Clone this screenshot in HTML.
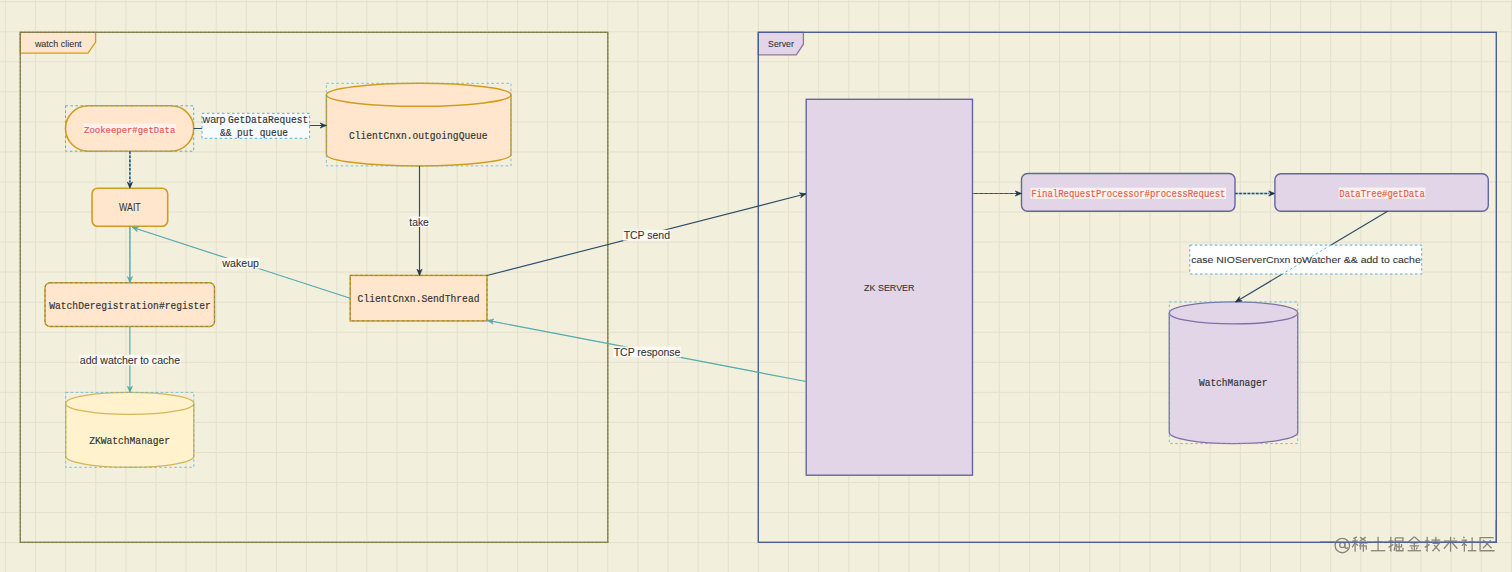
<!DOCTYPE html>
<html><head><meta charset="utf-8"><style>
html,body{margin:0;padding:0;background:#f2efdd;width:1512px;height:572px;overflow:hidden;}
svg{display:block;}
</style></head><body><svg width="1512" height="572" viewBox="0 0 1512 572"><g stroke="#e3e0cc" stroke-width="1"><line x1="5.40" y1="0" x2="5.40" y2="572"/><line x1="35.52" y1="0" x2="35.52" y2="572"/><line x1="65.64" y1="0" x2="65.64" y2="572"/><line x1="95.76" y1="0" x2="95.76" y2="572"/><line x1="125.88" y1="0" x2="125.88" y2="572"/><line x1="156.00" y1="0" x2="156.00" y2="572"/><line x1="186.12" y1="0" x2="186.12" y2="572"/><line x1="216.24" y1="0" x2="216.24" y2="572"/><line x1="246.36" y1="0" x2="246.36" y2="572"/><line x1="276.48" y1="0" x2="276.48" y2="572"/><line x1="306.60" y1="0" x2="306.60" y2="572"/><line x1="336.72" y1="0" x2="336.72" y2="572"/><line x1="366.84" y1="0" x2="366.84" y2="572"/><line x1="396.96" y1="0" x2="396.96" y2="572"/><line x1="427.08" y1="0" x2="427.08" y2="572"/><line x1="457.20" y1="0" x2="457.20" y2="572"/><line x1="487.32" y1="0" x2="487.32" y2="572"/><line x1="517.44" y1="0" x2="517.44" y2="572"/><line x1="547.56" y1="0" x2="547.56" y2="572"/><line x1="577.68" y1="0" x2="577.68" y2="572"/><line x1="607.80" y1="0" x2="607.80" y2="572"/><line x1="637.92" y1="0" x2="637.92" y2="572"/><line x1="668.04" y1="0" x2="668.04" y2="572"/><line x1="698.16" y1="0" x2="698.16" y2="572"/><line x1="728.28" y1="0" x2="728.28" y2="572"/><line x1="758.40" y1="0" x2="758.40" y2="572"/><line x1="788.52" y1="0" x2="788.52" y2="572"/><line x1="818.64" y1="0" x2="818.64" y2="572"/><line x1="848.76" y1="0" x2="848.76" y2="572"/><line x1="878.88" y1="0" x2="878.88" y2="572"/><line x1="909.00" y1="0" x2="909.00" y2="572"/><line x1="939.12" y1="0" x2="939.12" y2="572"/><line x1="969.24" y1="0" x2="969.24" y2="572"/><line x1="999.36" y1="0" x2="999.36" y2="572"/><line x1="1029.48" y1="0" x2="1029.48" y2="572"/><line x1="1059.60" y1="0" x2="1059.60" y2="572"/><line x1="1089.72" y1="0" x2="1089.72" y2="572"/><line x1="1119.84" y1="0" x2="1119.84" y2="572"/><line x1="1149.96" y1="0" x2="1149.96" y2="572"/><line x1="1180.08" y1="0" x2="1180.08" y2="572"/><line x1="1210.20" y1="0" x2="1210.20" y2="572"/><line x1="1240.32" y1="0" x2="1240.32" y2="572"/><line x1="1270.44" y1="0" x2="1270.44" y2="572"/><line x1="1300.56" y1="0" x2="1300.56" y2="572"/><line x1="1330.68" y1="0" x2="1330.68" y2="572"/><line x1="1360.80" y1="0" x2="1360.80" y2="572"/><line x1="1390.92" y1="0" x2="1390.92" y2="572"/><line x1="1421.04" y1="0" x2="1421.04" y2="572"/><line x1="1451.16" y1="0" x2="1451.16" y2="572"/><line x1="1481.28" y1="0" x2="1481.28" y2="572"/><line x1="1511.40" y1="0" x2="1511.40" y2="572"/><line x1="0" y1="1.70" x2="1512" y2="1.70"/><line x1="0" y1="31.75" x2="1512" y2="31.75"/><line x1="0" y1="61.80" x2="1512" y2="61.80"/><line x1="0" y1="91.85" x2="1512" y2="91.85"/><line x1="0" y1="121.90" x2="1512" y2="121.90"/><line x1="0" y1="151.95" x2="1512" y2="151.95"/><line x1="0" y1="182.00" x2="1512" y2="182.00"/><line x1="0" y1="212.05" x2="1512" y2="212.05"/><line x1="0" y1="242.10" x2="1512" y2="242.10"/><line x1="0" y1="272.15" x2="1512" y2="272.15"/><line x1="0" y1="302.20" x2="1512" y2="302.20"/><line x1="0" y1="332.25" x2="1512" y2="332.25"/><line x1="0" y1="362.30" x2="1512" y2="362.30"/><line x1="0" y1="392.35" x2="1512" y2="392.35"/><line x1="0" y1="422.40" x2="1512" y2="422.40"/><line x1="0" y1="452.45" x2="1512" y2="452.45"/><line x1="0" y1="482.50" x2="1512" y2="482.50"/><line x1="0" y1="512.55" x2="1512" y2="512.55"/><line x1="0" y1="542.60" x2="1512" y2="542.60"/></g><path d="M758.3,32.3 L803.4,32.3 L803.4,44.2 L796.3,54.8 L758.3,54.8 Z" fill="#e1d5e7" stroke="#9673a6" stroke-width="1.3"/><path d="M20.25,32.3 L95.6,32.3 L95.6,42 L88,53.1 L20.25,53.1 Z" fill="#fde6d0" stroke="#d39c1e" stroke-width="1.3"/><rect x="20.25" y="32.3" width="587.55" height="510" fill="none" stroke="#8f8238" stroke-width="1.3"/><rect x="20.25" y="32.3" width="587.55" height="510" fill="none" stroke="#5a7a70" stroke-width="1.2" stroke-dasharray="2 2" opacity="0.6"/><rect x="758.3" y="32.3" width="738" height="510" fill="none" stroke="#4b5e96" stroke-width="1.4"/><text x="34.9" y="46.6" font-family='"Liberation Sans", sans-serif' font-size="9.6" fill="#333" textLength="46.70" lengthAdjust="spacingAndGlyphs" stroke="#333" stroke-width="0.08">watch client</text><text x="768.1" y="46.8" font-family='"Liberation Sans", sans-serif' font-size="9.6" fill="#333" textLength="25.70" lengthAdjust="spacingAndGlyphs" stroke="#333" stroke-width="0.08">Server</text><rect x="65.5" y="105.8" width="128.20" height="45.40" rx="22.7" fill="#ffe6cc" stroke="#d39c1e" stroke-width="1.6"/><rect x="65.5" y="105.8" width="128.2" height="45.4" fill="none" stroke="#52b0de" stroke-width="1" stroke-dasharray="2.5 2.5"/><rect x="83.50" y="123.6" width="92.40" height="10.40" fill="#fdf1ee"/><text x="84.1" y="132.6" font-family='"Liberation Mono", monospace' font-size="9.5" fill="#e5534b" textLength="91.20" lengthAdjust="spacingAndGlyphs" stroke="#e5534b" stroke-width="0.18">Zookeeper#getData</text><rect x="92" y="188.3" width="75.70" height="38.00" rx="5.5" fill="#ffe6cc" stroke="#d39c1e" stroke-width="1.6"/><text x="119.1" y="211.3" font-family='"Liberation Sans", sans-serif' font-size="10.2" fill="#333" textLength="21.60" lengthAdjust="spacingAndGlyphs" stroke="#333" stroke-width="0.08">WAIT</text><path d="M326.4,94.8 A92.30000000000001,11.5 0 0 1 511,94.8 L511,154.4 A92.30000000000001,11.5 0 0 1 326.4,154.4 Z" fill="#ffe6cc" stroke="#d39c1e" stroke-width="1.5"/><path d="M326.4,94.8 A92.30000000000001,11.5 0 0 0 511,94.8" fill="none" stroke="#d39c1e" stroke-width="1.5"/><rect x="326.4" y="83.3" width="184.60" height="82.60" fill="none" stroke="#52b0de" stroke-width="1" stroke-dasharray="2.5 2.5" opacity="0.75"/><text x="349" y="139" font-family='"Liberation Mono", monospace' font-size="10.5" fill="#333" textLength="138.50" lengthAdjust="spacingAndGlyphs" stroke="#333" stroke-width="0.18">ClientCnxn.outgoingQueue</text><rect x="45" y="282.8" width="169.50" height="43.60" rx="5" fill="#ffe6cc" stroke="#d39c1e" stroke-width="1.5"/><rect x="45" y="282.8" width="169.50" height="43.60" rx="5" fill="none" stroke="#3f7488" stroke-width="1" stroke-dasharray="2.5 2.5" opacity="0.6"/><text x="49.3" y="308.5" font-family='"Liberation Mono", monospace' font-size="10.5" fill="#333" textLength="161.50" lengthAdjust="spacingAndGlyphs" stroke="#333" stroke-width="0.18">WatchDeregistration#register</text><path d="M65.7,403.4 A64.05000000000001,11 0 0 1 193.8,403.4 L193.8,456.3 A64.05000000000001,11 0 0 1 65.7,456.3 Z" fill="#fff2cc" stroke="#d6b656" stroke-width="1.4"/><path d="M65.7,403.4 A64.05000000000001,11 0 0 0 193.8,403.4" fill="none" stroke="#d6b656" stroke-width="1.4"/><rect x="65.7" y="392.4" width="128.10" height="74.90" fill="none" stroke="#52b0de" stroke-width="1" stroke-dasharray="2.5 2.5" opacity="0.75"/><text x="89.2" y="443.9" font-family='"Liberation Mono", monospace' font-size="10.5" fill="#333" textLength="80.80" lengthAdjust="spacingAndGlyphs" stroke="#333" stroke-width="0.18">ZKWatchManager</text><rect x="350.2" y="275.4" width="136.80" height="45.50" rx="0" fill="#ffe6cc" stroke="#d39c1e" stroke-width="1.5"/><rect x="350.2" y="275.4" width="136.80" height="45.50" rx="0" fill="none" stroke="#3f7488" stroke-width="1" stroke-dasharray="2.5 2.5" opacity="0.6"/><text x="357.6" y="301.5" font-family='"Liberation Mono", monospace' font-size="10.5" fill="#333" textLength="121.90" lengthAdjust="spacingAndGlyphs" stroke="#333" stroke-width="0.18">ClientCnxn.SendThread</text><rect x="806.2" y="99.3" width="166.30" height="375.90" rx="0" fill="#e1d5e7" stroke="#62679e" stroke-width="1.4"/><text x="864.1" y="291.2" font-family='"Liberation Sans", sans-serif' font-size="9.8" fill="#333" textLength="50.40" lengthAdjust="spacingAndGlyphs" stroke="#333" stroke-width="0.08">ZK SERVER</text><rect x="1021.5" y="173.5" width="213.50" height="37.80" rx="6" fill="#e1d5e7" stroke="#62679e" stroke-width="1.4"/><rect x="1030.60" y="187.8" width="195.50" height="11.10" fill="#fdf2f0"/><text x="1031.2" y="196.7" font-family='"Liberation Mono", monospace' font-size="10" fill="#e4604a" textLength="194.30" lengthAdjust="spacingAndGlyphs" stroke="#e4604a" stroke-width="0.18">FinalRequestProcessor#processRequest</text><rect x="1274.9" y="173.8" width="213.40" height="37.40" rx="6" fill="#e1d5e7" stroke="#62679e" stroke-width="1.4"/><rect x="1338.70" y="187.6" width="86.70" height="11.10" fill="#fdf2f0"/><text x="1339.3" y="196.5" font-family='"Liberation Mono", monospace' font-size="10" fill="#e4604a" textLength="85.50" lengthAdjust="spacingAndGlyphs" stroke="#e4604a" stroke-width="0.18">DataTree#getData</text><path d="M1169.3,312.9 A64.20000000000005,11 0 0 1 1297.7,312.9 L1297.7,432.6 A64.20000000000005,11 0 0 1 1169.3,432.6 Z" fill="#e1d5e7" stroke="#8070a8" stroke-width="1.4"/><path d="M1169.3,312.9 A64.20000000000005,11 0 0 0 1297.7,312.9" fill="none" stroke="#8070a8" stroke-width="1.4"/><rect x="1169.3" y="301.9" width="128.40" height="141.70" fill="none" stroke="#52b0de" stroke-width="1" stroke-dasharray="2.5 2.5" opacity="0.75"/><text x="1199" y="385.7" font-family='"Liberation Mono", monospace' font-size="10.5" fill="#333" textLength="68.40" lengthAdjust="spacingAndGlyphs" stroke="#333" stroke-width="0.18">WatchManager</text><path d="M193.7,128.5 L250,128.5" fill="none" stroke="#2a4e66" stroke-width="1.15"/><path d="M250,125.5 L326.4,125.5" fill="none" stroke="#2a4e66" stroke-width="1.15"/><path d="M326.40,125.50 L320.20,128.10 L322.06,125.50 L320.20,122.90 Z" fill="#1c3446" stroke="#1c3446" stroke-width="0.6"/><rect x="202" y="113.3" width="107.6" height="25" fill="#f7fbfd"/><rect x="202" y="113.3" width="107.6" height="25" fill="none" stroke="#52b0de" stroke-width="1" stroke-dasharray="2.5 2.5"/><text x="202.6" y="123" font-family='"Liberation Sans", sans-serif' font-size="10.5" fill="#333" textLength="22.80" lengthAdjust="spacingAndGlyphs" stroke="#333" stroke-width="0.08">warp</text><text x="228" y="123" font-family='"Liberation Mono", monospace' font-size="10.5" fill="#333" textLength="80.20" lengthAdjust="spacingAndGlyphs" stroke="#333" stroke-width="0.18">GetDataRequest</text><text x="220" y="135.5" font-family='"Liberation Mono", monospace' font-size="10.5" fill="#333" textLength="68.00" lengthAdjust="spacingAndGlyphs" stroke="#333" stroke-width="0.18">&amp;&amp; put queue</text><path d="M129.9,151.2 L129.9,188.3" stroke="#8cc8e6" stroke-width="1.4"/><path d="M129.9,151.2 L129.9,182.5" stroke="#2a4e66" stroke-width="1.5" stroke-dasharray="2.6 1.6"/><path d="M129.90,188.30 L127.30,182.10 L129.90,183.96 L132.50,182.10 Z" fill="#1c3446" stroke="#1c3446" stroke-width="0.6"/><path d="M129.9,226.3 L129.9,282.8" fill="none" stroke="#55aaa5" stroke-width="1.4"/><path d="M129.9,226.3 L129.9,282.8" fill="none" stroke="#52b0de" stroke-width="0.8" stroke-dasharray="2.5 2.5" opacity="0.5"/><path d="M129.90,282.80 L127.30,276.60 L129.90,278.46 L132.50,276.60 Z" fill="#55aaa5" stroke="#55aaa5" stroke-width="0.6"/><path d="M129.9,326.4 L129.9,392.4" fill="none" stroke="#55aaa5" stroke-width="1.15"/><path d="M129.90,392.40 L127.30,386.20 L129.90,388.06 L132.50,386.20 Z" fill="#55aaa5" stroke="#55aaa5" stroke-width="0.6"/><rect x="79.20" y="354.7" width="101.40" height="10.60" fill="#fbfaf4"/><text x="79.8" y="363.8" font-family='"Liberation Sans", sans-serif' font-size="10" fill="#333" textLength="100.20" lengthAdjust="spacingAndGlyphs" stroke="#333" stroke-width="0.08">add watcher to cache</text><path d="M419.5,165.9 L419.5,275.4" fill="none" stroke="#2a4e66" stroke-width="1.15"/><path d="M419.50,275.40 L416.90,269.20 L419.50,271.06 L422.10,269.20 Z" fill="#1c3446" stroke="#1c3446" stroke-width="0.6"/><rect x="408.70" y="216.6" width="20.70" height="10.40" fill="#fbfaf4"/><text x="409.3" y="225.7" font-family='"Liberation Sans", sans-serif' font-size="10.5" fill="#333" textLength="19.50" lengthAdjust="spacingAndGlyphs" stroke="#333" stroke-width="0.08">take</text><path d="M350.2,298.3 L132.1,227.3" fill="none" stroke="#55aaa5" stroke-width="1.15"/><path d="M350.2,298.3 L132.1,227.3" fill="none" stroke="#52b0de" stroke-width="0.8" stroke-dasharray="2.5 2.5" opacity="0.5"/><path d="M132.10,227.30 L138.80,226.75 L136.23,228.64 L137.19,231.69 Z" fill="#55aaa5" stroke="#55aaa5" stroke-width="0.6"/><rect x="221.70" y="257.9" width="37.90" height="10.70" fill="#fbfaf4"/><text x="222.3" y="266.8" font-family='"Liberation Sans", sans-serif' font-size="10.5" fill="#333" textLength="36.70" lengthAdjust="spacingAndGlyphs" stroke="#333" stroke-width="0.08">wakeup</text><path d="M487,275.5 L806,193.8" fill="none" stroke="#2a4e66" stroke-width="1.15"/><path d="M806.00,193.80 L800.64,197.86 L801.80,194.88 L799.35,192.82 Z" fill="#1c3446" stroke="#1c3446" stroke-width="0.6"/><rect x="623.10" y="229.8" width="47.50" height="10.80" fill="#fbfaf4"/><text x="623.7" y="239" font-family='"Liberation Sans", sans-serif' font-size="10.5" fill="#333" textLength="46.30" lengthAdjust="spacingAndGlyphs" stroke="#333" stroke-width="0.08">TCP send</text><path d="M806,381.5 L487.4,320.4" fill="none" stroke="#55aaa5" stroke-width="1.15"/><path d="M806,381.5 L487.4,320.4" fill="none" stroke="#52b0de" stroke-width="0.8" stroke-dasharray="2.5 2.5" opacity="0.5"/><path d="M487.40,320.40 L493.98,319.01 L491.66,321.22 L493.00,324.12 Z" fill="#55aaa5" stroke="#55aaa5" stroke-width="0.6"/><rect x="613.10" y="346.6" width="67.90" height="10.80" fill="#fbfaf4"/><text x="613.7" y="355.8" font-family='"Liberation Sans", sans-serif' font-size="10.5" fill="#333" textLength="66.70" lengthAdjust="spacingAndGlyphs" stroke="#333" stroke-width="0.08">TCP response</text><path d="M972.5,193.5 L1021.5,193.5" fill="none" stroke="#2a4e66" stroke-width="1.15"/><path d="M972.5,193.5 L1021.5,193.5" fill="none" stroke="#52b0de" stroke-width="0.8" stroke-dasharray="2.5 2.5" opacity="0.5"/><path d="M1021.50,193.50 L1015.30,196.10 L1017.16,193.50 L1015.30,190.90 Z" fill="#1c3446" stroke="#1c3446" stroke-width="0.6"/><path d="M1235,193.5 L1274.9,193.5" stroke="#8cc8e6" stroke-width="1.3"/><path d="M1235,193.5 L1269,193.5" stroke="#2a4e66" stroke-width="1.4" stroke-dasharray="2.6 1.6"/><path d="M1274.90,193.50 L1268.70,196.10 L1270.56,193.50 L1268.70,190.90 Z" fill="#1c3446" stroke="#1c3446" stroke-width="0.6"/><path d="M1387.6,211.2 L1235.5,302" fill="none" stroke="#2a4e66" stroke-width="1.15"/><path d="M1235.50,302.00 L1239.49,296.59 L1239.23,299.78 L1242.16,301.05 Z" fill="#1c3446" stroke="#1c3446" stroke-width="0.6"/><rect x="1189.8" y="245.1" width="231.9" height="28.9" fill="#ffffff"/><rect x="1189.8" y="245.1" width="231.9" height="28.9" fill="none" stroke="#52b0de" stroke-width="1" stroke-dasharray="2.5 2.5"/><path d="M1330.8,245.1 L1282.4,274" fill="none" stroke="#52b0de" stroke-width="0.9" stroke-dasharray="2.5 2.5"/><text x="1191.2" y="263.1" font-family='"Liberation Sans", sans-serif' font-size="9.7" fill="#333" textLength="229.60" lengthAdjust="spacingAndGlyphs" stroke="#333" stroke-width="0.08">case NIOServerCnxn toWatcher &amp;&amp; add to cache</text><g fill="none" stroke="#fbfaf3" stroke-width="2.6" stroke-linecap="round" opacity="0.45"><circle cx="1342.3" cy="545.5" r="7.2"/><circle cx="1342.3" cy="545" r="2.6"/><path d="M1344.9,542.3 L1344.9,547.5 Q1346,549 1348,547.5"/><g transform="translate(1352.20,536.2) scale(0.9688)"><path d="M5,0.8 L1,2.5"/><path d="M0,5 L6,5"/><path d="M3,2 L3,16"/><path d="M3,6.5 L0,11.5"/><path d="M3.5,7.5 L6,9.5"/><path d="M8,1 L14,5"/><path d="M14,1 L8,5"/><path d="M7,7 L16,7"/><path d="M10.5,5.5 L7.5,10.5"/><path d="M8.5,10 L14.5,10 L14.5,14"/><path d="M8.5,10 L8.5,14"/><path d="M11.5,8 L11.5,16"/></g><g transform="translate(1370.33,536.2) scale(0.9688)"><path d="M3,6 L13,6"/><path d="M8,0.5 L8,15"/><path d="M0.5,15 L15.5,15"/></g><g transform="translate(1388.46,536.2) scale(0.9688)"><path d="M0,5 L5,5"/><path d="M2.5,0.5 L2.5,15 L1.3,14"/><path d="M0,11.5 L5,8.5"/><path d="M7,1.8 L15,1.8 L15,5 L7,5"/><path d="M7,1.8 L7,10 L5.8,15"/><path d="M11,6 L11,15"/><path d="M8.5,8 L8.5,11 L13.5,11 L13.5,8"/><path d="M8,12 L8,15 L15,15 L15,12"/></g><g transform="translate(1406.59,536.2) scale(0.9688)"><path d="M8,0.5 L0.5,7"/><path d="M8,0.5 L15.5,7"/><path d="M4,6.8 L12,6.8"/><path d="M3,10 L13,10"/><path d="M8,6.8 L8,15"/><path d="M5,11.5 L6,13.8"/><path d="M11,11.5 L10,13.8"/><path d="M1,15 L15,15"/></g><g transform="translate(1424.72,536.2) scale(0.9688)"><path d="M0,5 L5,5"/><path d="M2.5,0.5 L2.5,15 L1.3,14"/><path d="M0,11.5 L5,8.5"/><path d="M7,4 L16,4"/><path d="M11.5,0.5 L11.5,7"/><path d="M8,7.5 L15,7.5 L8,15.5"/><path d="M9.5,9 L15.5,15.5"/></g><g transform="translate(1442.85,536.2) scale(0.9688)"><path d="M1,5 L15,5"/><path d="M8,0.5 L8,16"/><path d="M7.5,5.5 L1,13"/><path d="M8.5,5.5 L15,13"/><path d="M11,1.5 L12.5,3"/></g><g transform="translate(1460.98,536.2) scale(0.9688)"><path d="M2.5,0.5 L3.5,2"/><path d="M0.5,4 L5.5,4 L1,10"/><path d="M3.5,7 L3.5,16"/><path d="M4,8 L6,10"/><path d="M8,6 L15,6"/><path d="M11.5,1 L11.5,15"/><path d="M7,15 L16,15"/></g><g transform="translate(1479.11,536.2) scale(0.9688)"><path d="M15,1.5 L1,1.5 L1,15 L16,15"/><path d="M4,4 L13,12.5"/><path d="M12,4 L4,12.5"/></g></g><g fill="none" stroke="#888578" stroke-width="1.35" stroke-linecap="butt"><circle cx="1342.3" cy="545.5" r="7.2"/><circle cx="1342.3" cy="545" r="2.6"/><path d="M1344.9,542.3 L1344.9,547.5 Q1346,549 1348,547.5"/><g transform="translate(1352.20,536.2) scale(0.9688)"><path d="M5,0.8 L1,2.5"/><path d="M0,5 L6,5"/><path d="M3,2 L3,16"/><path d="M3,6.5 L0,11.5"/><path d="M3.5,7.5 L6,9.5"/><path d="M8,1 L14,5"/><path d="M14,1 L8,5"/><path d="M7,7 L16,7"/><path d="M10.5,5.5 L7.5,10.5"/><path d="M8.5,10 L14.5,10 L14.5,14"/><path d="M8.5,10 L8.5,14"/><path d="M11.5,8 L11.5,16"/></g><g transform="translate(1370.33,536.2) scale(0.9688)"><path d="M3,6 L13,6"/><path d="M8,0.5 L8,15"/><path d="M0.5,15 L15.5,15"/></g><g transform="translate(1388.46,536.2) scale(0.9688)"><path d="M0,5 L5,5"/><path d="M2.5,0.5 L2.5,15 L1.3,14"/><path d="M0,11.5 L5,8.5"/><path d="M7,1.8 L15,1.8 L15,5 L7,5"/><path d="M7,1.8 L7,10 L5.8,15"/><path d="M11,6 L11,15"/><path d="M8.5,8 L8.5,11 L13.5,11 L13.5,8"/><path d="M8,12 L8,15 L15,15 L15,12"/></g><g transform="translate(1406.59,536.2) scale(0.9688)"><path d="M8,0.5 L0.5,7"/><path d="M8,0.5 L15.5,7"/><path d="M4,6.8 L12,6.8"/><path d="M3,10 L13,10"/><path d="M8,6.8 L8,15"/><path d="M5,11.5 L6,13.8"/><path d="M11,11.5 L10,13.8"/><path d="M1,15 L15,15"/></g><g transform="translate(1424.72,536.2) scale(0.9688)"><path d="M0,5 L5,5"/><path d="M2.5,0.5 L2.5,15 L1.3,14"/><path d="M0,11.5 L5,8.5"/><path d="M7,4 L16,4"/><path d="M11.5,0.5 L11.5,7"/><path d="M8,7.5 L15,7.5 L8,15.5"/><path d="M9.5,9 L15.5,15.5"/></g><g transform="translate(1442.85,536.2) scale(0.9688)"><path d="M1,5 L15,5"/><path d="M8,0.5 L8,16"/><path d="M7.5,5.5 L1,13"/><path d="M8.5,5.5 L15,13"/><path d="M11,1.5 L12.5,3"/></g><g transform="translate(1460.98,536.2) scale(0.9688)"><path d="M2.5,0.5 L3.5,2"/><path d="M0.5,4 L5.5,4 L1,10"/><path d="M3.5,7 L3.5,16"/><path d="M4,8 L6,10"/><path d="M8,6 L15,6"/><path d="M11.5,1 L11.5,15"/><path d="M7,15 L16,15"/></g><g transform="translate(1479.11,536.2) scale(0.9688)"><path d="M15,1.5 L1,1.5 L1,15 L16,15"/><path d="M4,4 L13,12.5"/><path d="M12,4 L4,12.5"/></g></g><path d="M1320,542.3 L1496.3,542.3 L1496.3,520" fill="none" stroke="#4b5e96" stroke-width="1.4" opacity="0.85"/></svg></body></html>
